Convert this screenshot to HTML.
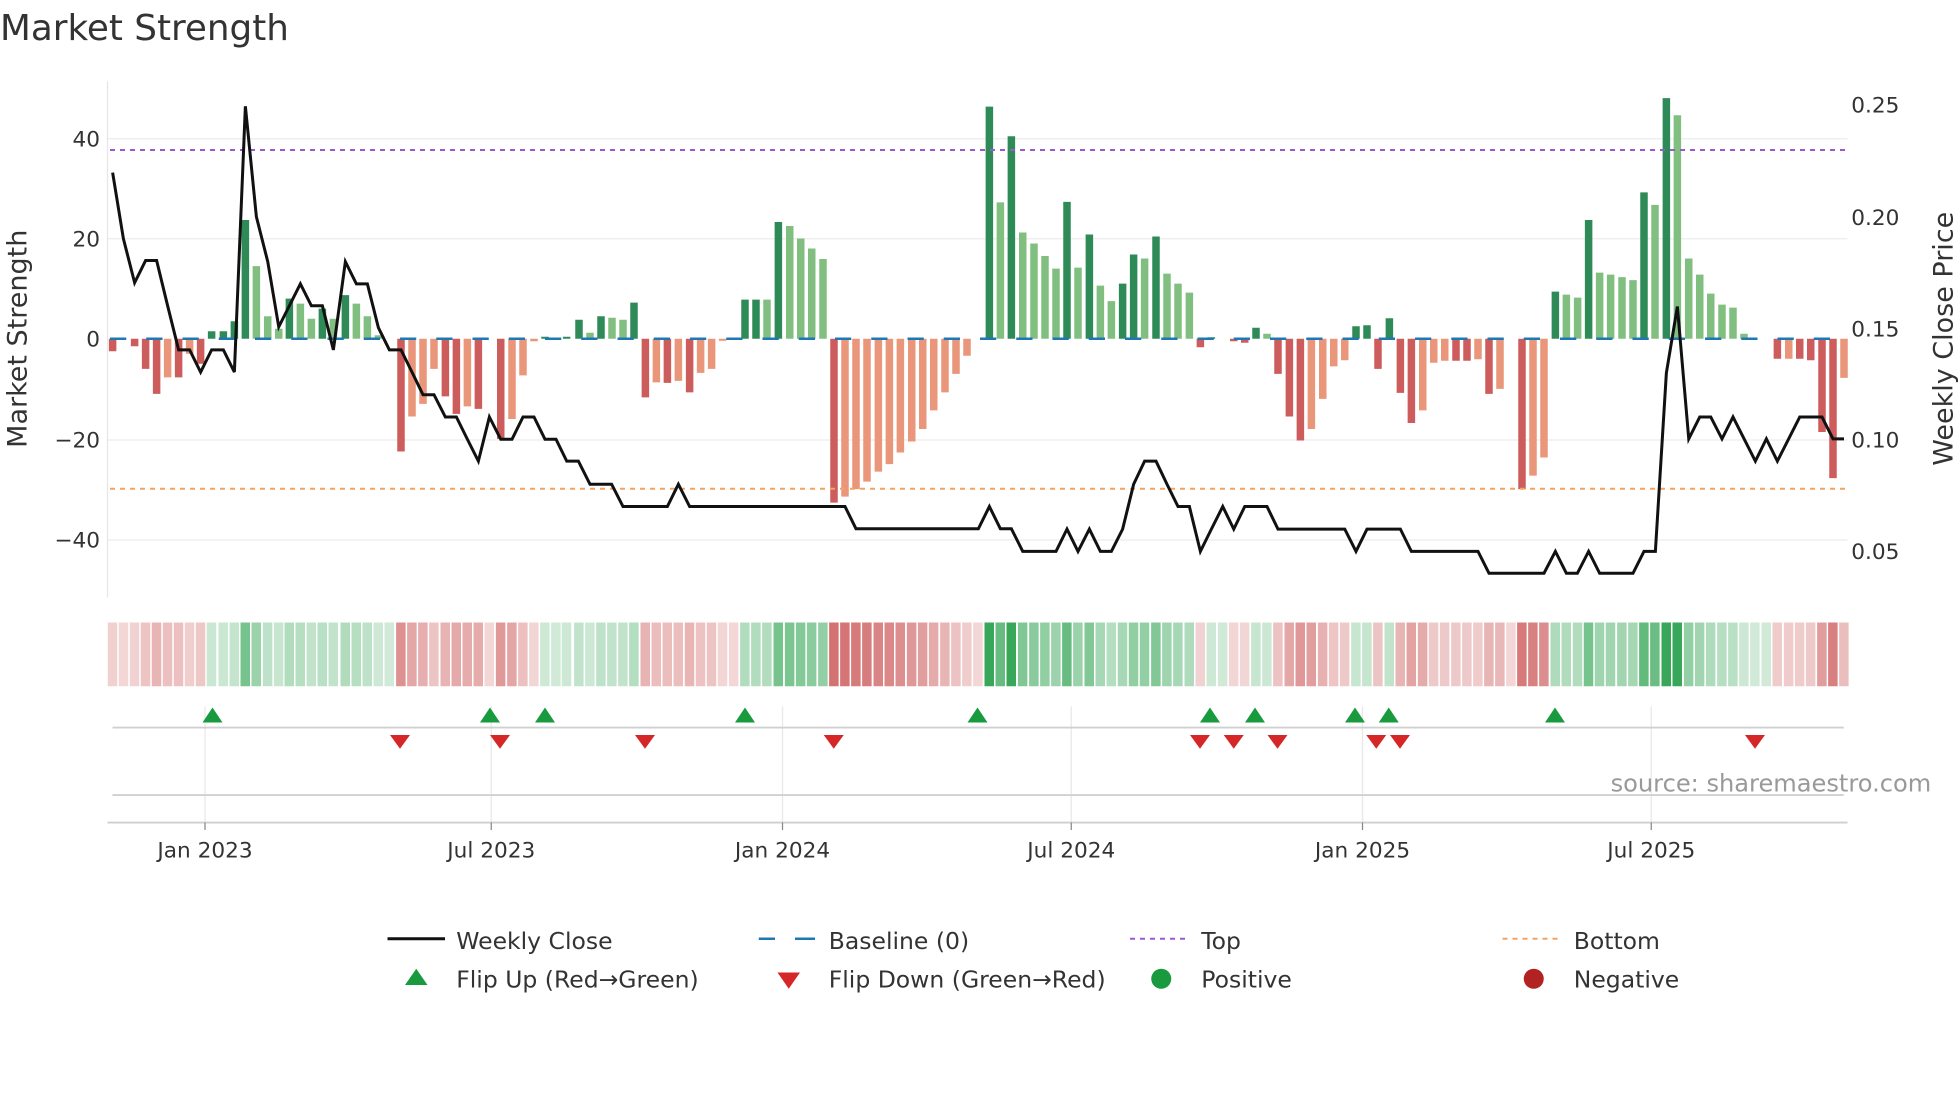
<!DOCTYPE html>
<html><head><meta charset="utf-8">
<style>
html,body{margin:0;padding:0;background:#fff;}
svg{display:block;}
text{font-family:"DejaVu Sans","Liberation Sans",sans-serif;fill:#333;}
</style></head>
<body>
<svg id="c" width="1960" height="1102" viewBox="0 0 1568 881.6" xmlns="http://www.w3.org/2000/svg">
<text x="0" y="32" font-size="28.6">Market Strength</text>
<g stroke="#ececec" stroke-width="1">
<line x1="86" y1="111" x2="1478" y2="111"/>
<line x1="86" y1="191" x2="1478" y2="191"/>
<line x1="86" y1="352" x2="1478" y2="352"/>
<line x1="86" y1="432" x2="1478" y2="432"/>
</g>
<line x1="86" y1="65" x2="86" y2="478" stroke="#e6e6e6"/>
<g font-size="17.3" text-anchor="end">
<text x="80" y="117">40</text>
<text x="80" y="197">20</text>
<text x="80" y="277">0</text>
<text x="80" y="358">−20</text>
<text x="80" y="438">−40</text>
</g>
<g font-size="17.3">
<text x="1481" y="90">0.25</text>
<text x="1481" y="180">0.20</text>
<text x="1481" y="269">0.15</text>
<text x="1481" y="358">0.10</text>
<text x="1481" y="447">0.05</text>
</g>
<text transform="translate(21,271) rotate(-90)" font-size="21.6" text-anchor="middle">Market Strength</text>
<text transform="translate(1562,271) rotate(-90)" font-size="21.6" text-anchor="middle">Weekly Close Price</text>
<g id="bars"></g>
<line x1="88" y1="271" x2="1476" y2="271" stroke="#1f77b4" stroke-width="2" stroke-dasharray="13,16"/>
<line x1="88" y1="120" x2="1476" y2="120" stroke="#9b59d0" stroke-width="1.6" stroke-dasharray="4,4"/>
<line x1="88" y1="391" x2="1476" y2="391" stroke="#f4a261" stroke-width="1.6" stroke-dasharray="4,4"/>
<polyline id="price" fill="none" stroke="#111" stroke-width="2.4" stroke-linejoin="miter"/>
<g id="strip"></g>
<g stroke="#e8e8e8" stroke-width="1">
<line x1="164" y1="565" x2="164" y2="658"/><line x1="393" y1="565" x2="393" y2="658"/>
<line x1="626" y1="565" x2="626" y2="658"/><line x1="857" y1="565" x2="857" y2="658"/>
<line x1="1090" y1="565" x2="1090" y2="658"/><line x1="1321" y1="565" x2="1321" y2="658"/>
</g>
<line x1="90" y1="582" x2="1475" y2="582" stroke="#d0d0d0" stroke-width="1.5"/>
<line x1="90" y1="636" x2="1475" y2="636" stroke="#d0d0d0" stroke-width="1.5"/>
<line x1="86" y1="658" x2="1478" y2="658" stroke="#cfcfcf" stroke-width="1.5"/>
<g stroke="#888" stroke-width="1">
<line x1="164" y1="658" x2="164" y2="664"/><line x1="393" y1="658" x2="393" y2="664"/>
<line x1="626" y1="658" x2="626" y2="664"/><line x1="857" y1="658" x2="857" y2="664"/>
<line x1="1090" y1="658" x2="1090" y2="664"/><line x1="1321" y1="658" x2="1321" y2="664"/>
</g>
<g id="mk"></g>
<g font-size="17.3" text-anchor="middle">
<text x="164" y="686">Jan 2023</text><text x="393" y="686">Jul 2023</text>
<text x="626" y="686">Jan 2024</text><text x="857" y="686">Jul 2024</text>
<text x="1090" y="686">Jan 2025</text><text x="1321" y="686">Jul 2025</text>
</g>
<text x="1545" y="633" font-size="19.3" text-anchor="end" style="fill:#999">source: sharemaestro.com</text>
<line x1="310" y1="751" x2="356" y2="751" stroke="#111" stroke-width="2.4"/>
<text x="365" y="759" font-size="18.8">Weekly Close</text>
<line x1="607" y1="751" x2="652" y2="751" stroke="#1f77b4" stroke-width="2" stroke-dasharray="13,16"/>
<line x1="638" y1="751" x2="652" y2="751" stroke="#1f77b4" stroke-width="2"/>
<text x="663" y="759" font-size="18.8">Baseline (0)</text>
<line x1="904" y1="751" x2="950" y2="751" stroke="#9b59d0" stroke-width="1.6" stroke-dasharray="4,4"/>
<text x="961" y="759" font-size="18.8">Top</text>
<line x1="1202" y1="751" x2="1248" y2="751" stroke="#f4a261" stroke-width="1.6" stroke-dasharray="4,4"/>
<text x="1259" y="759" font-size="18.8">Bottom</text>
<polygon points="324,788 342,788 333,775" fill="#1a9a3f"/>
<text x="365" y="790" font-size="18.8">Flip Up (Red→Green)</text>
<polygon points="622,778 640,778 631,791" fill="#d62728"/>
<text x="663" y="790" font-size="18.8">Flip Down (Green→Red)</text>
<circle cx="929" cy="783" r="8" fill="#1a9a3f"/>
<text x="961" y="790" font-size="18.8">Positive</text>
<circle cx="1227" cy="783" r="8" fill="#b22222"/>
<text x="1259" y="790" font-size="18.8">Negative</text>
</svg>
<script>
(function(){
var NS="http://www.w3.org/2000/svg";
function el(t,a,p){var e=document.createElementNS(NS,t);for(var k in a)e.setAttribute(k,a[k]);p.appendChild(e);return e;}
var Z=[[80,[[38,-2.5,'R'],[71,0,''],[104,-1.5,'R'],[137,-6,'R'],[170,-11,'R'],[203,-7.7,'O'],[236,-7.7,'R'],[269,-3,'O'],[302,-5,'R'],[335,1.5,'D'],[370,1.5,'D'],[403,3.5,'D'],[436,23.7,'D'],[469,14.5,'L'],[503,4.5,'L'],[536,2,'L'],[568,8,'D'],[601,7,'L'],[634,4,'L'],[667,6,'D'],[700,4,'L'],[736,8.7,'D'],[769,7,'L'],[802,4.5,'L'],[835,0.7,'L'],[868,0,''],[903,-22.5,'R'],[936,-15.5,'O'],[969,-13,'O'],[1002,-6,'O'],[1036,-11.5,'R'],[1069,-15,'R'],[1102,-13.5,'O'],[1135,-14,'R'],[1168,0,''],[1202,-20,'R'],[1236,-16,'O'],[1269,-7.3,'O'],[1302,-0.5,'O'],[1335,0.4,'D'],[1368,0,'']]],
[448,[[20,0.4,'D'],[57,3.8,'D'],[90,1.2,'L'],[123,4.5,'D'],[156,4.2,'L'],[189,3.8,'L'],[222,7.2,'D'],[256,-11.7,'R'],[289,-8.7,'O'],[322,-8.8,'R'],[355,-8.4,'O'],[389,-10.7,'R'],[422,-6.8,'O'],[455,-6,'O'],[488,-0.4,'O'],[521,0,''],[555,7.8,'D'],[588,7.8,'D'],[621,7.8,'L'],[655,23.3,'D'],[689,22.5,'L'],[722,20,'L'],[755,18,'L'],[789,15.9,'L'],[822,-32.7,'R'],[855,-31.5,'O'],[888,-30,'O'],[921,-28.5,'O'],[955,-26.5,'O'],[988,-25,'O'],[1021,-22.7,'O'],[1055,-20.5,'O'],[1088,-18,'O'],[1121,-14.3,'O'],[1155,-10.7,'O'],[1188,-7,'O'],[1221,-3.4,'O'],[1254,0,''],[1288,46.3,'D'],[1321,27.2,'L'],[1354,40.4,'D'],[1388,21.2,'L']]],
[816,[[42,19,'L'],[75,16.5,'L'],[108,14,'L'],[141,27.3,'D'],[174,14.2,'L'],[208,20.8,'D'],[241,10.6,'L'],[274,7.5,'L'],[308,11,'D'],[341,16.8,'D'],[374,16,'L'],[408,20.4,'D'],[441,13,'L'],[474,11,'L'],[508,9.2,'L'],[541,-1.7,'R'],[574,0.3,'D'],[608,0,''],[641,-0.5,'R'],[674,-0.8,'R'],[708,2.2,'D'],[741,1,'L'],[774,-7,'R'],[808,-15.5,'R'],[841,-20.3,'R'],[874,-18,'O'],[908,-12,'O'],[941,-5.5,'O'],[974,-4.3,'O'],[1008,2.5,'D'],[1041,2.7,'D'],[1074,-6,'R'],[1108,4.1,'D'],[1141,-10.8,'R'],[1174,-16.8,'R'],[1208,-14.3,'O'],[1241,-4.8,'O'],[1274,-4.4,'O'],[1308,-4.4,'R'],[1341,-4.4,'R'],[1374,-4.1,'O']]],
[1184,[[27,-11,'R'],[60,-10,'O'],[93,0,''],[126,-30,'R'],[159,-27.3,'O'],[192,-23.7,'O'],[226,9.4,'D'],[259,8.8,'L'],[293,8.2,'L'],[326,23.7,'D'],[359,13.2,'L'],[392,12.8,'L'],[426,12.3,'L'],[459,11.7,'L'],[492,29.2,'D'],[525,26.7,'L'],[559,48,'D'],[592,44.6,'L'],[626,16,'L'],[659,12.8,'L'],[692,9,'L'],[726,6.8,'L'],[759,6.2,'L'],[792,1,'L'],[825,0,''],[859,0,''],[892,-4,'R'],[926,-4,'O'],[959,-4,'R'],[992,-4.3,'R'],[1026,-18.6,'R'],[1059,-27.8,'R'],[1092,-7.8,'O']]]];
var col={D:'#2e8b57',L:'#80bf80',R:'#cd5c5c',O:'#e9967a'};
var bars=document.getElementById('bars'),strip=document.getElementById('strip');
var lastSign=-1;
Z.forEach(function(z){z[1].forEach(function(b){
 var x=z[0]+b[0]*0.2667,v=b[1],h=v*4.01;
 if(b[2]){el('rect',{x:(x-3).toFixed(1),y:(h>0?271-h:271).toFixed(1),width:6,height:Math.max(Math.abs(h),1).toFixed(1),fill:col[b[2]]},bars);}
 if(v>0)lastSign=1;else if(v<0)lastSign=-1;
 var a=0.22+0.7*Math.min(Math.abs(v)/40,1);
 var c=lastSign>0?'rgb(40,160,75)':'rgb(200,75,75)';
 el('rect',{x:(x-3.9).toFixed(1),y:498,width:7.6,height:51,fill:c,'fill-opacity':a.toFixed(2)},strip);
});});
var P=[[80,[[38,218],[70,390],[104,505],[137,447],[170,447],[203,565],[236,680],[269,680],[302,738],[335,680],[370,680],[403,738],[436,45],[469,333],[503,450],[536,620],[568,565],[601,508],[634,565],[667,565],[700,680],[736,450],[769,508],[802,508],[835,622],[868,680],[903,680],[936,738],[969,797],[1002,797],[1036,855],[1069,855],[1102,913],[1135,970],[1168,855],[1202,913],[1236,913],[1269,855],[1302,855],[1335,913],[1368,913],[1400,970]]],
[448,[[55,970],[90,1030],[155,1030],[189,1088],[322,1088],[355,1030],[389,1088],[855,1088],[888,1146],[1255,1146],[1288,1088],[1321,1146],[1354,1146],[1388,1205]]],
[816,[[108,1205],[141,1147],[174,1205],[208,1147],[241,1205],[274,1205],[308,1147],[341,1030],[374,970],[408,970],[441,1030],[474,1088],[508,1088],[541,1205],[574,1147],[608,1088],[641,1147],[674,1088],[741,1088],[774,1147],[974,1147],[1008,1205],[1041,1147],[1141,1147],[1174,1205],[1374,1205]]],
[1184,[[27,1262],[192,1262],[226,1205],[259,1262],[292,1262],[326,1205],[359,1262],[459,1262],[492,1205],[526,1205],[559,740],[592,567],[626,912],[659,855],[692,855],[726,912],[759,855],[826,970],[859,912],[892,970],[959,855],[1026,855],[1059,912],[1092,912]]]];
var pts=[];P.forEach(function(z){z[1].forEach(function(p){pts.push((z[0]+p[0]*0.2667).toFixed(1)+','+(271+(p[1]-651)*0.307).toFixed(1));});});
document.getElementById('price').setAttribute('points',pts.join(' '));
var mk=document.getElementById('mk');
[170,392,436,596,782,968,1004,1084,1111,1244].forEach(function(x){el('polygon',{points:(x-8)+',578 '+(x+8)+',578 '+x+',566',fill:'#1a9a3f'},mk);});
[320,400,516,667,960,987,1022,1101,1120,1404].forEach(function(x){el('polygon',{points:(x-8)+',588 '+(x+8)+',588 '+x+',599',fill:'#d62728'},mk);});
})();
</script>
</body></html>
